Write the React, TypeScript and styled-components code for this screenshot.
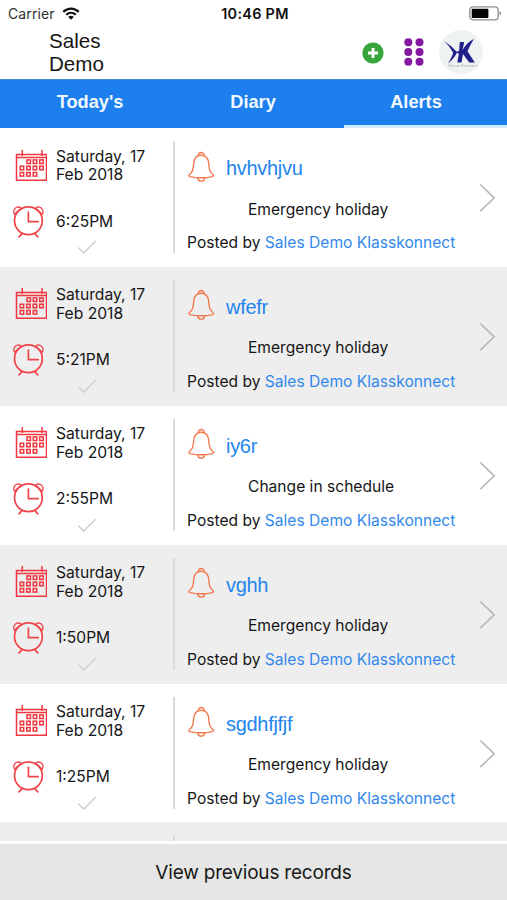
import React from "react";
import styled, { createGlobalStyle } from "styled-components";

const GlobalStyle = createGlobalStyle`
  * { box-sizing: border-box; }
  body { margin: 0; background: #fff; }
  svg { display: block; flex: none; }
`;

const sans = `Inter, "Liberation Sans", sans-serif`;
const helvetica = `"Liberation Sans", Arial, sans-serif`;

const Screen = styled.div`
  width: 507px;
  height: 900px;
  display: flex;
  flex-direction: column;
  overflow: hidden;
  background: #fff;
  color: #161616;
  font-family: ${sans};
`;

const StatusBar = styled.div`
  height: 27px;
  flex: none;
  display: grid;
  grid-template-columns: 1fr auto 1fr;
  align-items: center;
  padding: 0 5px 0 8px;
  font-size: 14px;
  line-height: 27px;
`;

const Carrier = styled.div`
  display: flex;
  align-items: center;
  gap: 7px;
  color: #303030;
  letter-spacing: 0.1px;
`;

const Clock = styled.div`
  font-size: 14.4px;
  font-weight: 600;
  letter-spacing: 0.3px;
  color: #111;
`;

const BatterySlot = styled.div`
  display: flex;
  justify-content: flex-end;
`;

const Header = styled.header`
  height: 52px;
  flex: none;
  display: flex;
  padding: 2px 24px 0 49px;
`;

const UserName = styled.h1`
  margin: 0;
  width: 80px;
  font: 400 20.6px/23px ${helvetica};
  color: #161616;
`;

const Actions = styled.div`
  margin-left: auto;
  height: 46px;
  display: flex;
  align-items: center;
`;

const AddSlot = styled.div`
  margin: 1px 20px 0 0;
`;

const GridSlot = styled.div`
  margin-right: 15px;
`;

const Tabs = styled.nav`
  height: 49px;
  flex: none;
  display: grid;
  grid-template-columns: 180px 164px 163px;
  background: #1d7fee;
  border-top: 1px solid #3f8ad9;
`;

const Tab = styled.div<{ $active?: boolean; $inset?: number }>`
  padding-right: ${(p) => p.$inset ?? 0}px;
  text-align: center;
  font: 700 18.2px/45px ${helvetica};
  color: #f1f9ff;
  border-bottom: ${(p) => (p.$active ? "4px solid #d2ecff" : "0")};
`;

const List = styled.main`
  height: 713.3px;
  flex: none;
  overflow: hidden;
`;

const Row = styled.article<{ $shaded: boolean }>`
  height: 138.9px;
  padding-top: 13px;
  display: flex;
  align-items: flex-start;
  background: ${(p) => (p.$shaded ? "#eeeeee" : "#fff")};
`;

const When = styled.div`
  width: 175px;
  height: 112px;
  flex: none;
  padding-left: 13px;
  border-right: 2px solid #dadada;
`;

const DateLine = styled.div`
  height: 52px;
  padding: 6.6px 0 0 2px;
  display: flex;
`;

const DateText = styled.div`
  margin-left: 9px;
  width: 110px;
  font-size: 15.65px;
  line-height: 18.8px;
`;

const TimeLine = styled.div`
  height: 46px;
  padding-top: 11px;
  display: flex;
  align-items: center;
  gap: 11px;
  font-size: 15.6px;
  line-height: 20px;
`;

const CheckLine = styled.div`
  padding: 1px 0 0 64px;
`;

const Details = styled.div`
  flex: 1;
  padding-left: 12px;
  white-space: nowrap;
`;

const TitleLine = styled.div`
  display: flex;
  align-items: center;
  gap: 11px;
  height: 51px;
`;

const Title = styled.div`
  padding-top: 3px;
  font: 400 20px/24px ${helvetica};
  letter-spacing: -0.3px;
  color: #2385ed;
`;

const Category = styled.div`
  padding: 7.6px 0 0 61px;
  font-size: 15.6px;
  line-height: 20px;
`;

const Posted = styled.div`
  margin-top: 13.4px;
  font-size: 15.6px;
  line-height: 20px;
`;

const Author = styled.span`
  color: #3288ec;
`;

const More = styled.div`
  padding: 42px 11px 0 0;
`;

const Footer = styled.button`
  margin: auto 0 0;
  padding: 1px 0 0;
  height: 56px;
  flex: none;
  border: 0;
  background: #e6e6e6;
  color: #181818;
  font: 400 19px/55px ${sans};
  letter-spacing: -0.2px;
`;

const WifiIcon = () => (
  <svg width="18" height="14" viewBox="0 0 18 14" fill="none" stroke="#111" strokeWidth="2.2">
    <path d="M1.3 4.9C5.7.5 12.3.5 16.7 4.9" />
    <path d="M4.2 7.8c2.8-2.7 6.8-2.7 9.6 0" />
    <path d="M6.2 9.9c1.7-1.4 3.9-1.4 5.6 0L9 12.8Z" fill="#111" stroke="none" />
  </svg>
);

const BatteryIcon = () => (
  <svg width="33" height="15" viewBox="0 0 33 15">
    <rect x=".8" y=".8" width="28.4" height="13" rx="3.3" fill="#fff" stroke="#8c8c8c" strokeWidth="1.3" />
    <rect x="2.7" y="2.7" width="16.7" height="9.2" rx="1" fill="#050505" />
    <path d="M30.6 5.2c2 .8 2 3.4 0 4.2Z" fill="#888" />
  </svg>
);

const AddIcon = () => (
  <svg width="22" height="22" viewBox="0 0 22 22">
    <circle cx="11" cy="11" r="10.6" fill="#38a43c" />
    <path d="M11 6v10M6 11h10" stroke="#fff" strokeWidth="2.9" />
  </svg>
);

const DotsIcon = () => (
  <svg width="20" height="28" viewBox="0 0 20 28" fill="#8418a0">
    {[4.3, 14, 23.7].flatMap((y) =>
      [4.3, 15.5].map((x) => <circle key={`${x}-${y}`} cx={x} cy={y} r="4" />)
    )}
  </svg>
);

const LogoIcon = () => (
  <svg width="44" height="44" viewBox="0 0 44 44">
    <circle cx="22" cy="22" r="22" fill="#eff2f3" />
    <g fill="#21208a">
      <path d="M5 11Q13 16 18.2 22.3Q15 29 9 33.5Q13 27 14.2 22.8Q11 16 5 11Z" />
      <path d="M20.8 12h4.4l-1.6 8.3Q27 13.2 35 8.8Q30.5 16 28.5 21.3L35.8 32.4h-5.6l-6.2-8.5-1.5 8.5h-4.2l1.6-9-3.2-1 3.4-1.6Z" />
    </g>
    <text x="9.5" y="37" fontFamily="Liberation Sans" fontSize="4" fill="#a0a3a6" textLength="29">Klass Konnect</text>
  </svg>
);

const calendarCells = [
  [12, 11.9], [18.3, 11.9], [24.7, 11.9],
  [5.2, 18.2], [11.7, 18.2], [18.2, 18.2], [24.7, 18.2],
  [5.2, 24.5], [11.7, 24.5], [18.2, 24.5],
];

const CalendarIcon = () => (
  <svg width="32" height="34" viewBox="0 0 32 34" fill="none" stroke="#f0363e" strokeWidth="1.5">
    <path d="M1.5 6.4h30v25.9h-30ZM1.5 9.4h30M7.3 2v6M27 2v6" />
    {calendarCells.map(([x, y]) => (
      <rect key={`${x}-${y}`} x={x} y={y} width="3.5" height="3.6" />
    ))}
  </svg>
);

const AlarmIcon = () => (
  <svg width="32" height="32" viewBox="0 0 32 32" fill="none" stroke="#f0444b" strokeWidth="1.7" strokeLinecap="round">
    <circle cx="15.4" cy="14.8" r="13.9" />
    <path d="M15.4 6v9.7h9.8M9 27.6l-3 3.2M21.8 27.6l3 3.2" />
    <path d="M1.8 8.6C-.4 5.6 1.3 1.6 4.4 1.1c1.9-.3 3.3.3 4.1 1.6M29 8.6c2.2-3 .5-7-2.6-7.5-1.9-.3-3.3.3-4.1 1.6M2.6 7.2l4.6-4.3M28.2 7.2l-4.6-4.3" strokeWidth="1.3" />
  </svg>
);

const CheckIcon = () => (
  <svg width="20" height="15" viewBox="0 0 20 15" fill="none" stroke="#d2d2d2" strokeWidth="1.6">
    <path d="M1.2 7.5 6.7 13 18.8 1" />
  </svg>
);

const BellIcon = () => (
  <svg width="28" height="32" viewBox="0 0 28 32" fill="none" stroke="#f27a4c" strokeWidth="1.4" strokeLinejoin="round">
    <path d="M14.2 4.3C9 4.3 6.9 8.3 6.6 13.2c-.4 6.6-1.5 8.2-4.3 10.5-.9.8-.5 1.6.6 1.9 6.6 1.4 16 1.4 22.6 0 1.1-.3 1.5-1.1.6-1.9-2.8-2.3-3.9-3.9-4.3-10.5-.3-4.9-2.4-8.9-7.6-8.9Z" />
    <path d="M11.4 4.7c-.4-4.3 6-4.3 5.6 0M10.8 26.8c.5 4.4 6.3 4.4 6.8 0" />
  </svg>
);

const ChevronIcon = () => (
  <svg width="17" height="30" viewBox="0 0 17 30" fill="none" stroke="#b9b9b9" strokeWidth="1.7">
    <path d="M1.3 1.5 15.2 14.8 1.3 28.1" />
  </svg>
);

const alerts = [
  { time: "6:25PM", title: "hvhvhjvu", category: "Emergency holiday" },
  { time: "5:21PM", title: "wfefr", category: "Emergency holiday" },
  { time: "2:55PM", title: "iy6r", category: "Change in schedule" },
  { time: "1:50PM", title: "vghh", category: "Emergency holiday" },
  { time: "1:25PM", title: "sgdhfjfjf", category: "Emergency holiday" },
];

type Alert = (typeof alerts)[number];

const AlertRow = ({ alert, shaded }: { alert: Alert; shaded: boolean }) => (
  <Row $shaded={shaded}>
    <When>
      <DateLine>
        <CalendarIcon />
        <DateText>Saturday, 17<br />Feb 2018</DateText>
      </DateLine>
      <TimeLine>
        <AlarmIcon />
        <span>{alert.time}</span>
      </TimeLine>
      <CheckLine><CheckIcon /></CheckLine>
    </When>
    <Details>
      <TitleLine>
        <BellIcon />
        <Title>{alert.title}</Title>
      </TitleLine>
      <Category>{alert.category}</Category>
      <Posted>Posted by <Author>Sales Demo Klasskonnect</Author></Posted>
    </Details>
    <More><ChevronIcon /></More>
  </Row>
);

export default function App() {
  return (
    <>
      <GlobalStyle />
      <Screen>
        <StatusBar>
          <Carrier>Carrier <WifiIcon /></Carrier>
          <Clock>10:46 PM</Clock>
          <BatterySlot><BatteryIcon /></BatterySlot>
        </StatusBar>
        <Header>
          <UserName>Sales<br />Demo</UserName>
          <Actions>
            <AddSlot><AddIcon /></AddSlot>
            <GridSlot><DotsIcon /></GridSlot>
            <LogoIcon />
          </Actions>
        </Header>
        <Tabs>
          <Tab>Today's</Tab>
          <Tab $inset={18}>Diary</Tab>
          <Tab $active $inset={19}>Alerts</Tab>
        </Tabs>
        <List>
          {alerts.map((alert, i) => (
            <AlertRow key={alert.time} alert={alert} shaded={i % 2 === 1} />
          ))}
          <Row $shaded><When /></Row>
        </List>
        <Footer>View previous records</Footer>
      </Screen>
    </>
  );
}
